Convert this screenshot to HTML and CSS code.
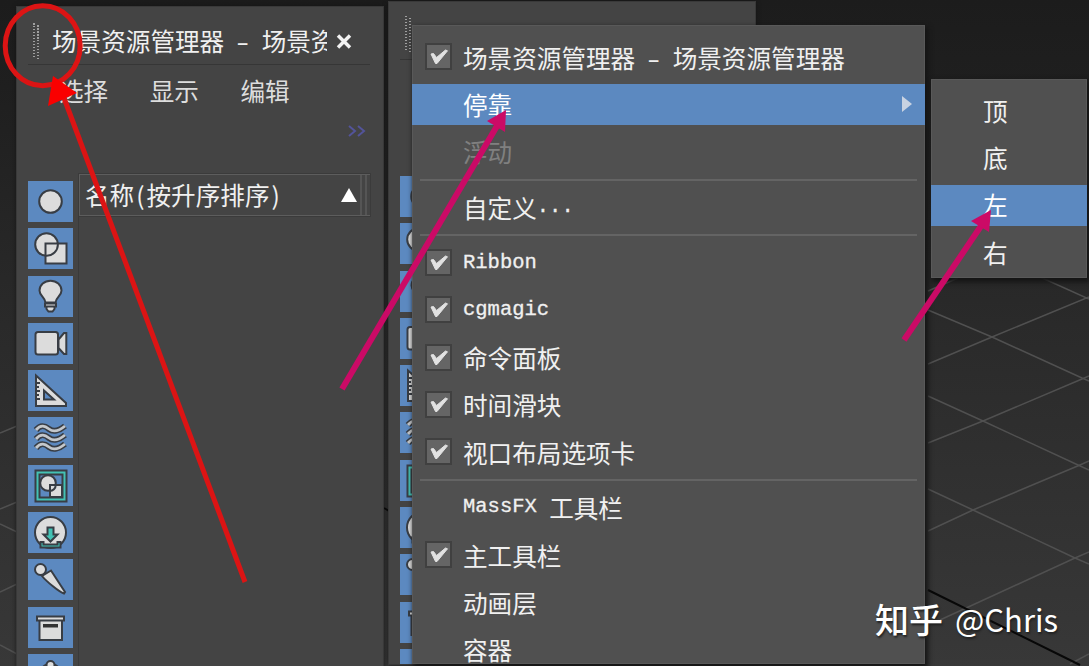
FILE: index.html
```html
<!DOCTYPE html>
<html lang="zh-CN">
<head>
    <meta charset="UTF-8">
    <meta name="viewport" content="width=device-width, initial-scale=1.0">
    <title>场景资源管理器</title>
    <link rel="stylesheet" href="styles.css">
</head>
<body>

<!-- toolbar icons -->
<svg class="defs">
    <symbol id="i-geometry" viewBox="0 0 45 41">
        <circle cx="22.5" cy="20.5" r="11.3"/>
    </symbol>
    <symbol id="i-shapes" viewBox="0 0 45 41">
        <circle cx="18.5" cy="16.5" r="11.3"/>
        <rect x="17.5" y="15.5" width="21" height="20"/>
        <path class="line" d="M29.8 15.5A11.3 11.3 0 0 1 17.5 27.8"/>
    </symbol>
    <symbol id="i-light" viewBox="0 0 45 41">
        <path d="M17.5 26.5C17 21 11.5 20 11.5 14.5a11 9.8 0 0 1 22 0C33.500 20 28 21 27.500 26.500Z"/>
        <path d="M17 27.500h11v3h-11zM18.500 30.500h8v2.500l-2 2.500h-4l-2-2.500z"/>
    </symbol>
    <symbol id="i-camera" viewBox="0 0 45 41">
        <rect x="7.500" y="9" width="22.500" height="22.500" rx="2.500"/>
        <path d="M30.500 16.500L36 10h2.300v21H36l-5.500-6z"/>
    </symbol>
    <symbol id="i-helper" viewBox="0 0 45 41">
        <path fill-rule="evenodd" d="M8 5.500L38 33v3H8zM16 20.500V29.500h10z"/>
        <path class="line" d="M8 13h4M8 17h3M8 21h4M8 25h3M8 29h4"/>
    </symbol>
    <symbol id="i-warp" viewBox="0 0 45 41">
        <g class="wave">
            <path d="M8 13c5-6 9-4 13-1s10 2 16-3"/>
            <path d="M8 22c5-6 9-4 13-1s10 2 16-3"/>
            <path d="M8 31c5-6 9-4 13-1s10 2 16-3"/>
        </g>
        <g class="wave-in">
            <path d="M8 13c5-6 9-4 13-1s10 2 16-3"/>
            <path d="M8 22c5-6 9-4 13-1s10 2 16-3"/>
            <path d="M8 31c5-6 9-4 13-1s10 2 16-3"/>
        </g>
    </symbol>
    <symbol id="i-group" viewBox="0 0 45 41">
        <rect class="teal" x="7.500" y="5.500" width="31" height="31"/>
        <rect class="blue" x="11.500" y="9.500" width="23" height="23"/>
        <circle cx="20" cy="18" r="7.800"/>
        <rect x="22" y="20" width="12" height="12"/>
        <path class="line" d="M27.800 19.500c0 4-3 6.500-6 6.500"/>
    </symbol>
    <symbol id="i-xref" viewBox="0 0 45 41">
        <circle cx="22.500" cy="20.500" r="15.500"/>
        <path class="teal" d="M19.500 15.500h6v7h4l-7 7-7-7h4z"/>
        <path class="teal" d="M12.500 30h3v2.500h14V30h3v5.500h-20z"/>
    </symbol>
    <symbol id="i-bone" viewBox="0 0 45 41">
        <path d="M14 17l9-5.500L37 33l-1 1.500C31 33 18 22 14 17z"/>
        <circle cx="12.500" cy="10.500" r="5.500"/>
    </symbol>
    <symbol id="i-box" viewBox="0 0 45 41">
        <rect x="11.500" y="13" width="22.500" height="20"/>
        <rect x="9" y="9.500" width="27" height="4"/>
        <rect class="dark" x="15" y="17" width="15" height="3.500"/>
    </symbol>
    <symbol id="i-all" viewBox="0 0 45 41">
        <path d="M12 24c0-9 3-14 10.500-14S33 15 33 24z"/>
        <circle cx="22.500" cy="11" r="4"/>
    </symbol>
    <symbol id="i-check" viewBox="0 0 23 23">
        <path d="M4 9l2.500-.5 3 4L18.500 5l2 .8L10 18.500H8.500z"/>
    </symbol>
</svg>

<div class="desktop">
    <!-- viewport grid -->
    <svg class="grid" width="1089" height="666">
        <path d="M928 310L992 337L1082 378L1089 381M928 364L992 337L1089 297M1040 277L1089 299M928 291L958 278"/>
        <path d="M928 396L983 421L1078 465L1089 470M928 443L983 421L1082 379L1089 376"/>
        <path d="M928 489L973 510L1075 558L1089 564M928 531L973 510L1080 465L1089 461M940 620L1075 558L1089 552M1070 664L1089 654"/>
        <path d="M0 433L17 426M0 509L17 502M0 524L17 532M0 592L17 584M0 645L17 654"/>
        <path class="axis" d="M928 590L1080 665M384 508l5 3"/>
    </svg>

    <div class="panel panel-left">
        <div class="titlebar">
            <div class="grip"></div>
            <div class="title">场景资源管理器<span class="dash">-</span>场景资源管理器</div>
            <svg class="close" width="18" height="18"><path d="M3 3.500L15 15.500M15 3.500L3 15.500"/></svg>
        </div>
        <div class="menubar"><span>选择</span><span>显示</span><span>编辑</span></div>
        <div class="more"><svg width="18" height="12"><path d="M1 1l6 5-6 5M10 1l6 5-6 5"/></svg></div>
        <div class="content">
            <div class="toolbar">
                <svg class="tool"><use href="#i-geometry"/></svg>
                <svg class="tool"><use href="#i-shapes"/></svg>
                <svg class="tool"><use href="#i-light"/></svg>
                <svg class="tool"><use href="#i-camera"/></svg>
                <svg class="tool"><use href="#i-helper"/></svg>
                <svg class="tool"><use href="#i-warp"/></svg>
                <svg class="tool"><use href="#i-group"/></svg>
                <svg class="tool"><use href="#i-xref"/></svg>
                <svg class="tool"><use href="#i-bone"/></svg>
                <svg class="tool"><use href="#i-box"/></svg>
                <svg class="tool"><use href="#i-all"/></svg>
            </div>
            <div class="list">
                <div class="list-head">
                    <div class="col">名称<span class="paren">(</span>按升序排序<span class="paren">)</span><svg class="sort" width="16" height="14"><path d="M8 0l8 14H0z"/></svg></div>
                    <div class="col-end"></div>
                </div>
            </div>
        </div>
    </div>

    <div class="panel panel-right">
        <div class="titlebar"><div class="grip"></div></div>
        <div class="menubar"></div>
        <div class="more"></div>
        <div class="content">
            <div class="toolbar">
                <svg class="tool"><use href="#i-geometry"/></svg>
                <svg class="tool"><use href="#i-shapes"/></svg>
                <svg class="tool"><use href="#i-light"/></svg>
                <svg class="tool"><use href="#i-camera"/></svg>
                <svg class="tool"><use href="#i-helper"/></svg>
                <svg class="tool"><use href="#i-warp"/></svg>
                <svg class="tool"><use href="#i-group"/></svg>
                <svg class="tool"><use href="#i-xref"/></svg>
                <svg class="tool"><use href="#i-bone"/></svg>
                <svg class="tool"><use href="#i-box"/></svg>
                <svg class="tool"><use href="#i-all"/></svg>
            </div>
        </div>
    </div>

    <div class="menu main-menu">
        <div class="item"><span class="check"><svg><use href="#i-check"/></svg></span>场景资源管理器<span class="dash">-</span>场景资源管理器</div>
        <div class="item active"><span class="blank"></span>停靠<svg class="arrow" width="10" height="16"><path d="M0 0l10 8-10 8z"/></svg></div>
        <div class="item disabled"><span class="blank"></span>浮动</div>
        <div class="sep"></div>
        <div class="item"><span class="blank"></span>自定义<span class="latin">...</span></div>
        <div class="sep"></div>
        <div class="item"><span class="check"><svg><use href="#i-check"/></svg></span><span class="latin">Ribbon</span></div>
        <div class="item"><span class="check"><svg><use href="#i-check"/></svg></span><span class="latin">cgmagic</span></div>
        <div class="item"><span class="check"><svg><use href="#i-check"/></svg></span>命令面板</div>
        <div class="item"><span class="check"><svg><use href="#i-check"/></svg></span>时间滑块</div>
        <div class="item"><span class="check"><svg><use href="#i-check"/></svg></span>视口布局选项卡</div>
        <div class="sep"></div>
        <div class="item"><span class="blank"></span><span class="latin">MassFX </span>工具栏</div>
        <div class="item"><span class="check"><svg><use href="#i-check"/></svg></span>主工具栏</div>
        <div class="item"><span class="blank"></span>动画层</div>
        <div class="item"><span class="blank"></span>容器</div>
    </div>

    <div class="menu sub-menu">
        <div class="item"><span class="blank"></span>顶</div>
        <div class="item"><span class="blank"></span>底</div>
        <div class="item active"><span class="blank"></span>左</div>
        <div class="item"><span class="blank"></span>右</div>
    </div>

    <!-- annotations -->
    <svg class="marks" width="1089" height="666">
        <g class="red">
            <ellipse cx="42.700" cy="45.700" rx="37.500" ry="40"/>
            <path d="M245 582L64 98"/>
            <path class="head" d="M53 76L48 106L77 93z"/>
        </g>
        <g class="pink">
            <path d="M342 389L497 126"/>
            <path class="head" d="M506 110L487 121L505 132z"/>
            <path d="M904 340L981 226"/>
            <path class="head" d="M991 210L971 221L989 232z"/>
        </g>
    </svg>

    <div class="watermark"><b>知乎</b><span>@Chris</span></div>
</div>

</body>
</html>
```

FILE: styles.css
```css
body {
    margin: 0;
    background: #1e1e1e;
    font-family: "Noto Sans CJK SC", sans-serif;
    font-size: 24.6px;
    color: #f0f0f0;
}
.defs {
    position: absolute;
    width: 0;
    height: 0;
}
.desktop {
    position: relative;
    width: 100%;
    height: 666px;
    overflow: hidden;
    background: linear-gradient(#1c1c1c 0%, #1f1f1f 13%, #292929 45%, #383838 100%);
}
.grid, .marks {
    position: absolute;
    left: 0;
    top: 0;
}
.grid path {
    fill: none;
    stroke: #505050;
    stroke-width: 1.5;
}
.grid .axis {
    stroke: #080808;
    stroke-width: 2;
}
.latin {
    font-family: "Liberation Mono", monospace;
    font-size: 20.5px;
    white-space: pre;
    -webkit-text-stroke: 0.3px;
}
.dash {
    display: inline-block;
    width: 37.5px;
    text-align: center;
    transform: scaleX(1.5);
}
.paren {
    width: 12.3px;
    text-align: center;
}

/* dock panels */
.panel {
    position: absolute;
    box-sizing: border-box;
    width: 366px;
    height: 670px;
    padding: 0 13px 0 11px;
    background: #444;
    box-shadow: 0 0 0 1px #393939, 0 0 5px #101010;
}
.panel-left {
    left: 17px;
    top: 7px;
}
.panel-right {
    left: 389px;
    top: 2px;
    height: 662px;
    overflow: hidden;
}
.titlebar {
    display: flex;
    align-items: center;
    height: 58px;
    padding: 11px 0 0 5px;
    box-sizing: border-box;
    border-bottom: 1px solid #363636;
}
.grip {
    width: 7px;
    height: 36px;
    background:
        repeating-linear-gradient(#a0a0a0 0 1.5px, transparent 1.5px 3px) 0 0 / 2px 34px no-repeat,
        repeating-linear-gradient(#a0a0a0 0 1.5px, transparent 1.5px 3px) 4px 2px / 2px 34px no-repeat;
}
.panel-right .grip {
    margin-top: -5px;
}
.title {
    width: 275px;
    height: 36px;
    line-height: 36px;
    margin: -3px 0 0 12px;
    overflow: hidden;
    white-space: nowrap;
}
.close {
    margin-left: 8px;
}
.close path {
    fill: none;
    stroke: #f2f2f2;
    stroke-width: 3.5;
}
.menubar {
    display: flex;
    gap: 41.5px;
    height: 54px;
    line-height: 51px;
    padding-left: 31px;
    color: #ddd;
}
.more {
    display: flex;
    justify-content: flex-end;
    height: 55px;
    padding: 6px 4px 0 0;
    box-sizing: border-box;
}
.more path {
    fill: none;
    stroke: #53549a;
    stroke-width: 2;
}
.content {
    display: flex;
    gap: 6px;
}
.toolbar {
    display: flex;
    flex-direction: column;
    gap: 6.3px;
    padding-top: 7px;
}
.tool {
    display: block;
    width: 45px;
    height: 41px;
    background: #5c89c0;
    fill: #dcdcdc;
    stroke: #383d44;
    stroke-width: 2;
}
.line {
    fill: none;
}
.teal {
    fill: #43c2b4;
}
.blue {
    fill: #5c89c0;
}
.dark {
    fill: #333;
    stroke: none;
}
.wave {
    fill: none;
    stroke-width: 6;
}
.wave-in {
    fill: none;
    stroke: #c4c8cc;
    stroke-width: 2.8;
}
.list {
    flex: 1;
    height: 520px;
    box-shadow: -1px 0 #3a3a3a;
}
.list-head {
    display: flex;
    height: 42px;
    box-sizing: border-box;
    border: 1px solid #5d5d5d;
    border-right: none;
    box-shadow: 0 0 0 1px #3b3b3b;
}
.col {
    display: flex;
    align-items: center;
    flex: 1;
    padding: 0 3px 2px 5px;
    border-right: 2px solid #555;
}
.sort {
    margin: 2px 0 0 auto;
    fill: #fff;
}
.col-end {
    width: 3px;
    margin-left: 3px;
    border-left: 2px solid #555;
}

/* popup menus */
.menu {
    position: absolute;
    display: flex;
    flex-direction: column;
    box-sizing: border-box;
    padding-top: 8.5px;
    background: #505050;
    box-shadow: inset 0 0 0 1px #595959, 2px 3px 5px 1px #141414;
}
.main-menu {
    left: 412px;
    top: 25px;
    width: 513px;
    height: 639px;
    overflow: hidden;
}
.sub-menu {
    left: 931px;
    top: 79px;
    width: 156px;
    height: 199px;
}
.item {
    display: flex;
    flex: none;
    align-items: center;
    box-sizing: border-box;
    height: 41.3px;
    margin: 3px 0;
    padding: 0 13px;
    line-height: 34px;
    white-space: nowrap;
}
.main-menu .item {
    padding-bottom: 1px;
}
.active {
    background: #5c89c0;
    color: #fff;
}
.disabled {
    color: #808080;
}
.check {
    display: flex;
    box-sizing: border-box;
    width: 27px;
    height: 27px;
    margin-right: 11px;
    border: 2px solid #404040;
    background: #656565;
}
.check svg {
    width: 23px;
    height: 23px;
    fill: #e2e2e2;
    stroke: #e2e2e2;
}
.blank {
    width: 38px;
}
.sub-menu .item {
    padding: 0 14px 3px;
}
.sep {
    flex: none;
    height: 2px;
    margin: 3.2px 8px;
    background: #646464;
}
.arrow {
    margin-left: auto;
    fill: #c9d3e2;
}

.marks .red {
    fill: none;
    stroke: #dc1414;
    stroke-width: 5;
}
.marks .pink {
    fill: none;
    stroke: #cb0a66;
    stroke-width: 6;
}
.marks .head {
    stroke: none;
    fill: #cb0a66;
}
.marks .red .head {
    fill: #fa0000;
}
.watermark {
    position: absolute;
    left: 875px;
    top: 594px;
    display: flex;
    align-items: center;
    gap: 12px;
    height: 48px;
    color: #fff;
    font-size: 31px;
    text-shadow: 1px 2px 2px #222;
}
.watermark b {
    font-size: 34px;
    font-weight: 500;
}
```
